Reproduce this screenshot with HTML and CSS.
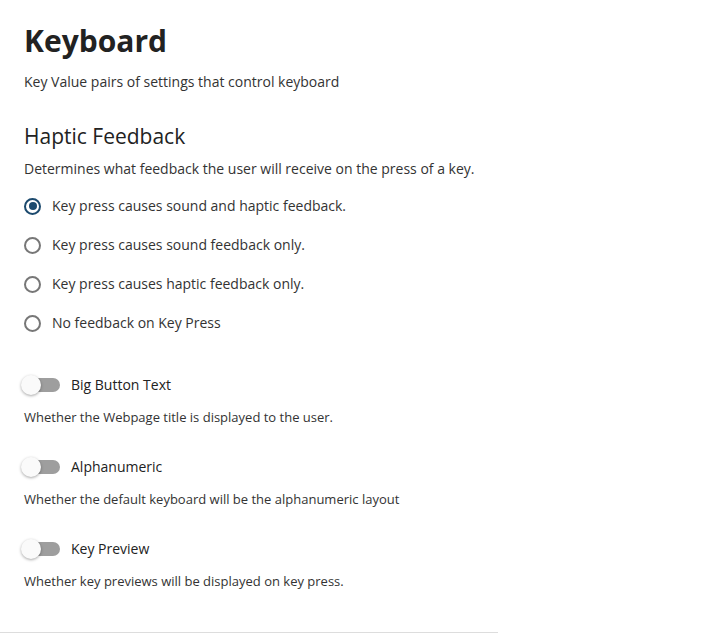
FILE: index.html
```html
<!DOCTYPE html>
<html lang="en">
<head>
  <meta charset="UTF-8">
  <meta name="viewport" content="width=device-width, initial-scale=1.0">
  <title>Keyboard Settings</title>
  <link rel="stylesheet" href="styles.css">
</head>
<body>
  <div class="page">
    <h1>Keyboard</h1>
    <p class="intro">Key Value pairs of settings that control keyboard</p>

    <!-- Haptic feedback choice -->
    <section class="group">
      <h2>Haptic Feedback</h2>
      <p class="group-desc">Determines what feedback the user will receive on the press of a key.</p>
      <label class="radio">
        <input type="radio" name="haptic" checked>
        <span class="dot"></span>
        Key press causes sound and haptic feedback.
      </label>
      <label class="radio">
        <input type="radio" name="haptic">
        <span class="dot"></span>
        Key press causes sound feedback only.
      </label>
      <label class="radio">
        <input type="radio" name="haptic">
        <span class="dot"></span>
        Key press causes haptic feedback only.
      </label>
      <label class="radio">
        <input type="radio" name="haptic">
        <span class="dot"></span>
        No feedback on Key Press
      </label>
    </section>

    <!-- Toggles -->
    <div class="setting">
      <label class="switch">
        <input type="checkbox">
        <span class="track"><span class="knob"></span></span>
        Big Button Text
      </label>
      <p class="setting-desc">Whether the Webpage title is displayed to the user.</p>
    </div>

    <div class="setting">
      <label class="switch">
        <input type="checkbox">
        <span class="track"><span class="knob"></span></span>
        Alphanumeric
      </label>
      <p class="setting-desc">Whether the default keyboard will be the alphanumeric layout</p>
    </div>

    <div class="setting">
      <label class="switch">
        <input type="checkbox">
        <span class="track"><span class="knob"></span></span>
        Key Preview
      </label>
      <p class="setting-desc">Whether key previews will be displayed on key press.</p>
    </div>

    <hr class="divider">
  </div>
</body>
</html>
```

FILE: styles.css
```css
/* General */
body {
  font-family: 'Open Sans', sans-serif;
  margin: 0;
  padding: 0;
  background: #fff;
  color: #333;
}

.page {
  padding: 22px 0 0 24px;
}

h1 {
  font-size: 30px;
  font-weight: 700;
  color: #222;
  margin: 0;
  line-height: 38px;
}

.intro {
  font-size: 14px;
  margin: 12px 0 0;
  line-height: 20px;
}

/* Radio group */
.group {
  margin-top: 30px;
}

h2 {
  font-size: 21px;
  font-weight: 400;
  color: #222;
  margin: 0;
  line-height: 28px;
}

.group-desc {
  font-size: 14px;
  margin: 9px 0 0;
  line-height: 20px;
}

.radio {
  display: flex;
  align-items: center;
  gap: 11px;
  font-size: 14px;
  line-height: 20px;
  margin-top: 17px;
  cursor: pointer;
}

.radio + .radio {
  margin-top: 19px;
}

.radio input,
.switch input {
  display: none;
}

.dot {
  box-sizing: border-box;
  width: 17px;
  height: 17px;
  border: 2px solid #777;
  border-radius: 50%;
  position: relative;
  flex-shrink: 0;
}

.radio input:checked + .dot {
  border-color: #1c4a6e;
}

.radio input:checked + .dot::after {
  content: '';
  position: absolute;
  top: 2.5px;
  left: 2.5px;
  width: 8px;
  height: 8px;
  border-radius: 50%;
  background: #1c4a6e;
}

/* Toggle settings */
.setting {
  margin-top: 42px;
}

.setting + .setting {
  margin-top: 31px;
}

.switch {
  display: flex;
  align-items: center;
  gap: 11px;
  font-size: 14px;
  line-height: 20px;
  color: #222;
  cursor: pointer;
}

.track {
  position: relative;
  width: 36px;
  height: 14px;
  border-radius: 7px;
  background: #9e9e9e;
  flex-shrink: 0;
}

.knob {
  position: absolute;
  top: -3px;
  left: -3px;
  width: 20px;
  height: 20px;
  border-radius: 50%;
  background: #fafafa;
  box-shadow: 0 1px 3px rgba(0, 0, 0, 0.35);
}

.switch input:checked + .track {
  background: #7aa3c4;
}

.switch input:checked + .track .knob {
  left: 19px;
  background: #1c4a6e;
}

.setting-desc {
  font-size: 13px;
  line-height: 18px;
  margin: 13px 0 0;
}

.divider {
  width: 498px;
  margin: 42px 0 0 -24px;
  border: none;
  border-top: 2px solid #ddd;
}
```
